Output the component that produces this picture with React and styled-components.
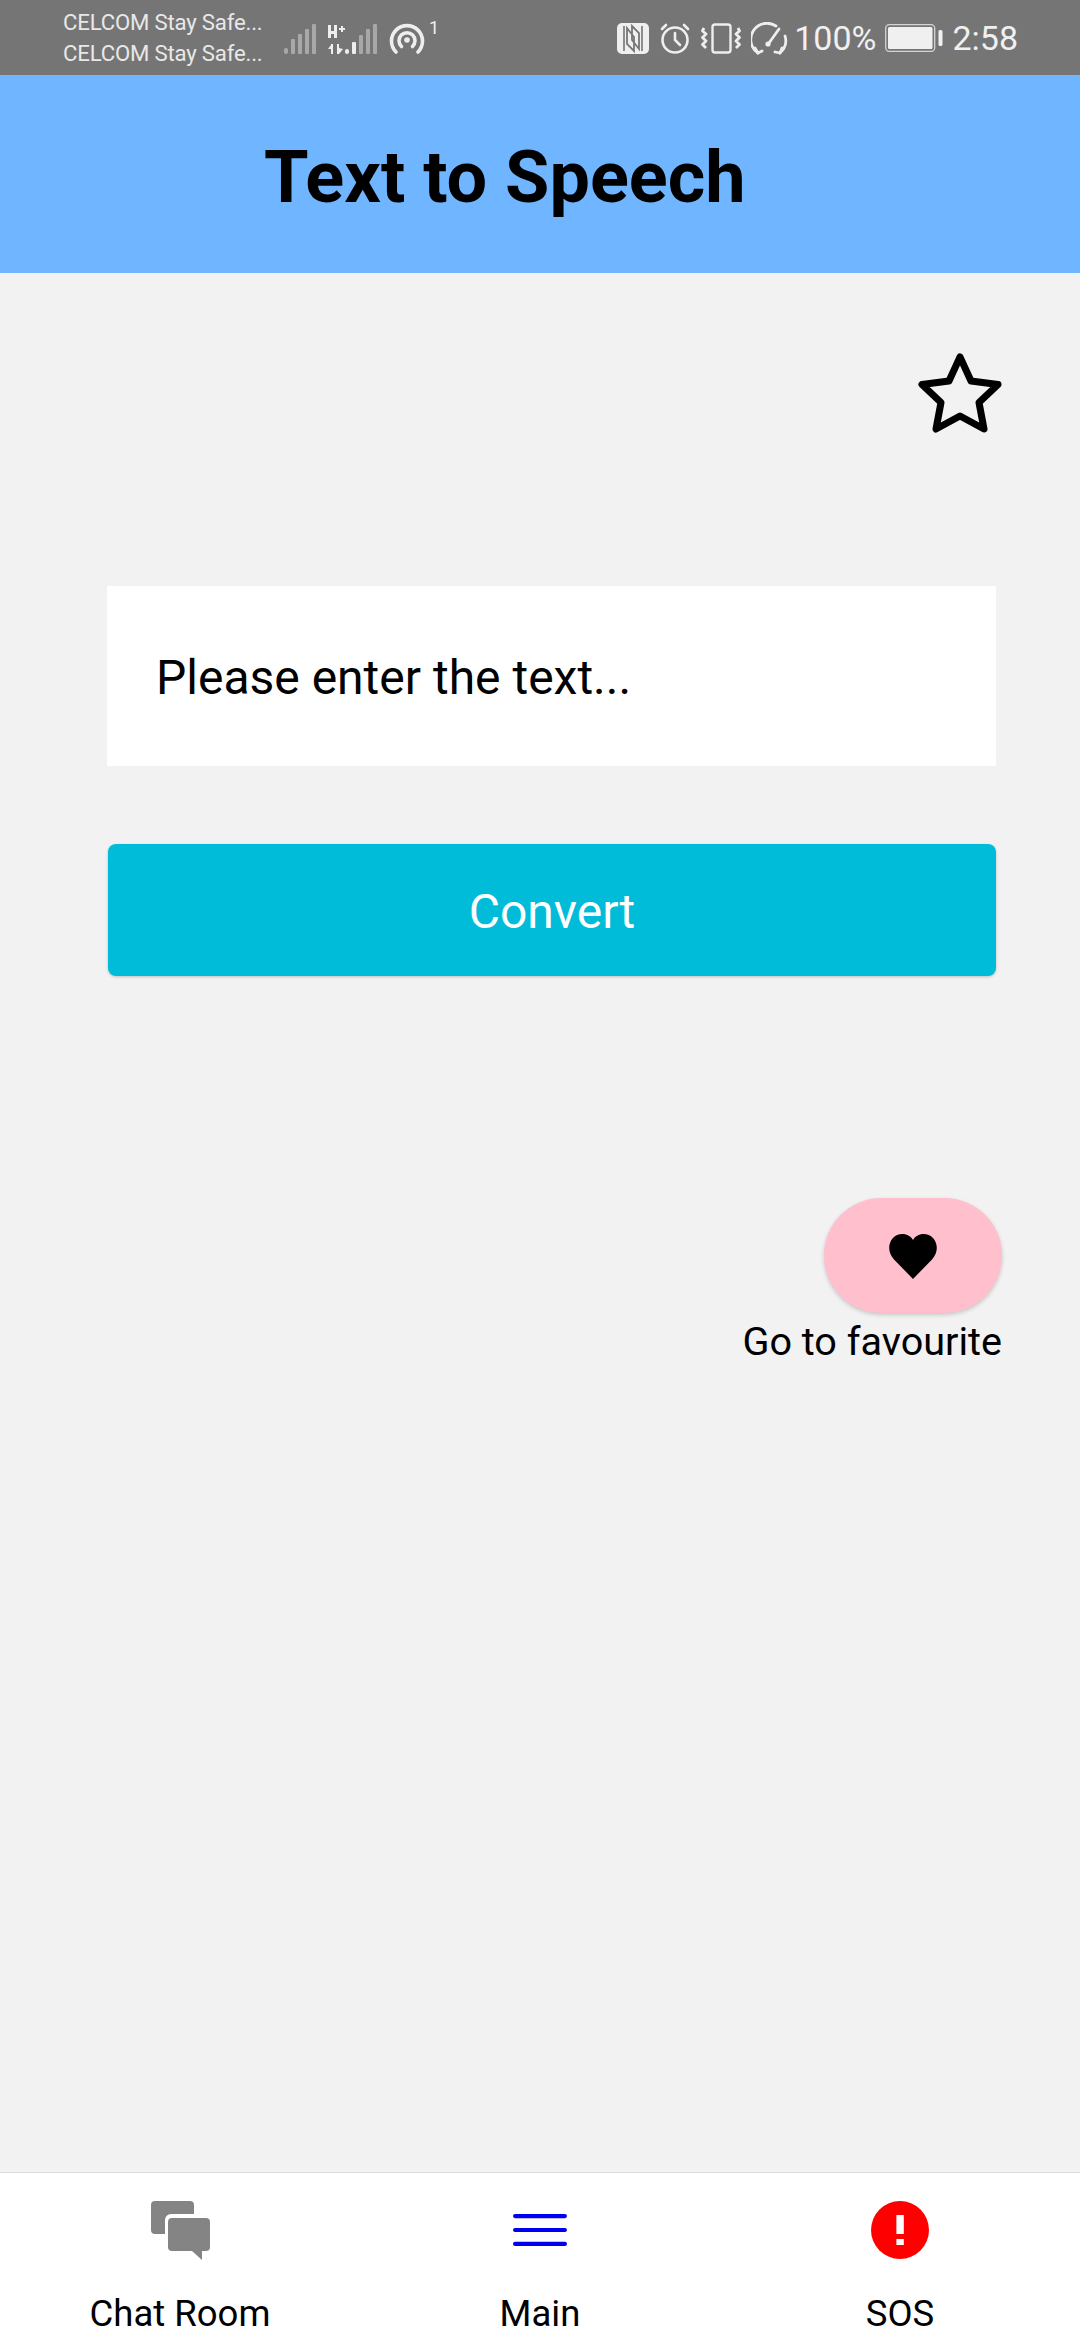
import React from "react";
import styled, { createGlobalStyle } from "styled-components";

const Global = createGlobalStyle`
  html, body { margin: 0; padding: 0; background: #f2f2f2; }
  * { box-sizing: border-box; }
`;

const Screen = styled.div`
  width: 1080px; height: 2340px; display: flex; flex-direction: column;
  background: #f2f2f2; font-family: Roboto, "Liberation Sans", sans-serif; color: #000; overflow: hidden;
`;
const StatusBar = styled.div`
  height: 75px; flex: none; background: #757575; color: #f0f0f0; display: flex; align-items: center;
  padding: 0 62px 0 63px; justify-content: space-between;
`;
const StatusGroup = styled.div`display: flex; align-items: center;`;
const Carriers = styled.div`
  font-size: 22.2px; line-height: 31px; width: 221px; letter-spacing: -0.2px; color: #e8e8e8; margin-top: 0;
`;
const RightText = styled.span`font-size: 34px; font-weight: 400; line-height: 1; letter-spacing: 0; margin-top: 1px;`;
const Header = styled.header`
  height: 198px; flex: none; background: #6fb5ff; display: flex; align-items: center; padding: 7px 0 0 264px;
`;
const Title = styled.h1`margin: 0; font-size: 72px; font-weight: 700; line-height: 1;`;
const Body = styled.main`flex: 1; display: flex; flex-direction: column;`;
const StarRow = styled.div`display: flex; justify-content: flex-end; padding: 80px 78px 0 0; height: 313px;`;
const Input = styled.div`
  margin-left: 107px; width: 889px; height: 180px; background: #fff; display: flex; align-items: center;
  padding-left: 49px; padding-top: 2px; font-size: 48px;
`;
const Convert = styled.div`
  margin: 78px 0 0 108px; width: 888px; height: 132px; background: #00bcd9; border-radius: 8px; color: #fff;
  display: flex; align-items: center; justify-content: center; font-size: 48px; padding-top: 2px;
  box-shadow: 0 1px 3px rgba(0,0,0,.2);
`;
const FavColumn = styled.div`
  margin: 222px 78px 0 0; align-self: flex-end; display: flex; flex-direction: column; align-items: flex-end;
`;
const Fab = styled.div`
  width: 178px; height: 115px; border-radius: 58px; background: #ffbfcc; display: flex; align-items: center; justify-content: center;
  box-shadow: 0 2px 4px rgba(0,0,0,.18);
`;
const FavLabel = styled.div`font-size: 39.6px; line-height: 47px; margin-top: 5px;`;
const Nav = styled.nav`
  height: 168px; flex: none; background: #fff; border-top: 1px solid #dcdcdc; display: grid; grid-template-columns: repeat(3, 360px);
`;
const NavItem = styled.div`
  display: flex; flex-direction: column; align-items: center; padding-top: 28px;
`;
const NavIcon = styled.div`height: 58px; display: flex; align-items: center; justify-content: center;`;
const NavLabel = styled.div`font-size: 36.5px; line-height: 44px; margin-top: 33px;`;

const HeartIcon = styled.svg`margin-top: 2px;`;
const Star = () => (
  <svg width="84" height="80" viewBox="0 0 84 80" fill="none" stroke="#000" strokeWidth="7" strokeLinejoin="round">
    <path d="M42 4 L53 28 L80 31.5 L61 49.5 L66 76 L42 63 L18 76 L23 49.5 L4 31.5 L31 28 Z" />
  </svg>
);
const Heart = () => (
  <HeartIcon width="48" height="45" viewBox="0 0 48 45">
    <path fill="#000" d="M24 45 L5 25.5 C-5 14 2 0 13.5 0 C18 0 22 2.5 24 6 C26 2.5 30 0 34.5 0 C46 0 53 14 43 25.5 Z" />
  </HeartIcon>
);
const Chat = () => (
  <svg width="59" height="59" viewBox="0 0 59 59">
    <path fill="#848484" d="M4 0H39a4 4 0 0 1 4 4V13H20a6 6 0 0 0-6 6V33H4a4 4 0 0 1-4-4V4a4 4 0 0 1 4-4Z" />
    <path fill="#848484" d="M21 17H55a4 4 0 0 1 4 4V46a4 4 0 0 1-4 4H51V59L41 50H21a4 4 0 0 1-4-4V21a4 4 0 0 1 4-4Z" />
  </svg>
);
const Menu = () => (
  <svg width="54" height="32" viewBox="0 0 54 32" fill="none" stroke="#0000ee" strokeWidth="4.2" strokeLinecap="round">
    <path d="M2.1 2.1H51.9M2.1 16H51.9M2.1 29.9H51.9" />
  </svg>
);
const Sos = () => (
  <svg width="58" height="58" viewBox="0 0 58 58">
    <circle cx="29" cy="29" r="29" fill="#ff0000" />
    <rect x="25.4" y="14" width="7.4" height="19" fill="#fff" />
    <rect x="25.4" y="38" width="7.4" height="6" fill="#fff" />
  </svg>
);
const Signal = () => (
  <svg width="32" height="30" viewBox="0 0 32 30" fill="#a8a8a8">
    <rect x="0" y="24" width="4" height="6" rx="2" />
    <rect x="7" y="15" width="4" height="15" rx="1" />
    <rect x="14" y="10" width="4" height="20" rx="1" />
    <rect x="21" y="5" width="4" height="25" rx="1" />
    <rect x="28" y="0" width="4" height="30" rx="1" />
  </svg>
);
const Signal2 = () => (
  <svg width="50" height="32" viewBox="0 0 50 32" fill="#a8a8a8">
    <path fill="#eee" d="M1 2H4V8H7V2H10V15H7V11H4V15H1ZM12 5H14V3H16V5H18V7H16V9H14V7H12Z" />
    <path fill="#eee" d="M4 21V31H6V21ZM1 26L4 22V26ZM10 21V31H12L16 26L12 25V21Z" />
    <rect x="18" y="26" width="4" height="5" rx="2" fill="#eee" />
    <rect x="25" y="19" width="4" height="12" rx="1" fill="#eee" />
    <rect x="32" y="12" width="4" height="19" rx="1" />
    <rect x="39" y="6" width="4" height="25" rx="1" />
    <rect x="46" y="1" width="4" height="30" rx="1" />
  </svg>
);
const Hotspot = () => (
  <svg width="36" height="31" viewBox="0 0 36 31" fill="none" stroke="#eee" strokeWidth="3.6" strokeLinecap="round">
    <path d="M7 29 A15.5 15.5 0 1 1 29 29" />
    <path d="M12.5 23.5 A8 8 0 1 1 23.5 23.5" />
    <circle cx="18" cy="17" r="2.8" fill="#eee" stroke="none" />
  </svg>
);
const Nfc = () => (
  <svg width="32" height="31" viewBox="0 0 32 31">
    <rect width="32" height="31" rx="5" fill="#efefef" />
    <path d="M7 3V28M25 3V28" stroke="#757575" strokeWidth="1.6" fill="none" />
    <path d="M10 5V21L17 28V14L10 5ZM22 26V10L15 3V17Z" fill="none" stroke="#757575" strokeWidth="1.8" />
  </svg>
);
const Alarm = () => (
  <svg width="30" height="31" viewBox="0 0 30 31" fill="none" stroke="#eee" strokeWidth="2.6" strokeLinecap="round">
    <circle cx="15" cy="17" r="12.5" />
    <path d="M15 10V17L20 22M2 6L6 2M28 6L24 2" />
  </svg>
);
const Vibrate = () => (
  <svg width="40" height="31" viewBox="0 0 40 31" fill="none" stroke="#eee" strokeWidth="2.4" strokeLinejoin="round">
    <rect x="11.5" y="1.5" width="18" height="28" rx="2.5" />
    <path d="M3 5L1.5 8L5 11L1.5 14.5L5 18L1.5 21.5L5 25M37 5L38.5 8L35 11L38.5 14.5L35 18L38.5 21.5L35 25" strokeWidth="2.8" />
  </svg>
);
const Gauge = () => (
  <svg width="37" height="33" viewBox="0 0 37 33" fill="none" stroke="#eee" strokeWidth="2.8" strokeLinecap="round">
    <path d="M7 31 A15.5 15.5 0 0 1 25 4" />
    <path d="M34 14 A15.5 15.5 0 0 1 29 31" />
    <path d="M4 26L7 31L11 29M24 30L29 31L31 26" />
    <path d="M18 21L28 7" />
    <circle cx="17" cy="22" r="2.6" fill="#eee" stroke="none" />
  </svg>
);
const Battery = () => (
  <svg width="58" height="28" viewBox="0 0 58 28">
    <rect x=".7" y=".7" width="49" height="26.6" rx="3.5" fill="none" stroke="#d4d4d4" strokeWidth="1.3" />
    <rect x="3" y="3" width="44.5" height="22" rx="1.5" fill="#f0f0f0" />
    <rect x="53.5" y="6" width="4" height="16" rx="1.5" fill="#f0f0f0" />
  </svg>
);
const Gap = styled.span`display: inline-block; width: ${p => p.$w}px;`;
const Sup = styled.span`font-size: 18px; line-height: 18px; align-self: flex-start; margin-left: 4px; margin-top: 0; color: #eee;`;
const SignalWrap = styled.div`display: flex; align-items: center; height: 40px; margin-top: 2px;`;
const IconWrap = styled.div`display: flex; align-items: center; margin-top: 2px;`;

export default function App() {
  return (
    <Screen>
      <Global />
      <StatusBar>
        <StatusGroup>
          <Carriers>CELCOM Stay Safe...<br />CELCOM Stay Safe...</Carriers>
          <SignalWrap>
            <Signal /><Gap $w={11} /><Signal2 /><Gap $w={12} /><Hotspot /><Sup>1</Sup>
          </SignalWrap>
        </StatusGroup>
        <StatusGroup>
          <IconWrap>
            <Nfc /><Gap $w={11} /><Alarm /><Gap $w={11} /><Vibrate /><Gap $w={10} /><Gauge />
          </IconWrap>
          <Gap $w={6} />
          <RightText>100%</RightText><Gap $w={9} /><Battery /><Gap $w={9} /><RightText>2:58</RightText>
        </StatusGroup>
      </StatusBar>
      <Header><Title>Text to Speech</Title></Header>
      <Body>
        <StarRow><Star /></StarRow>
        <Input>Please enter the text...</Input>
        <Convert>Convert</Convert>
        <FavColumn>
          <Fab><Heart /></Fab>
          <FavLabel>Go to favourite</FavLabel>
        </FavColumn>
      </Body>
      <Nav>
        <NavItem><NavIcon><Chat /></NavIcon><NavLabel>Chat Room</NavLabel></NavItem>
        <NavItem><NavIcon><Menu /></NavIcon><NavLabel>Main</NavLabel></NavItem>
        <NavItem><NavIcon><Sos /></NavIcon><NavLabel>SOS</NavLabel></NavItem>
      </Nav>
    </Screen>
  );
}
